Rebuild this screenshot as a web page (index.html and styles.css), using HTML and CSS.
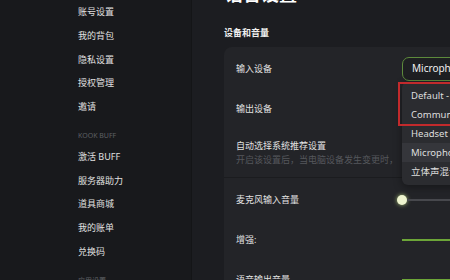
FILE: index.html
```html
<!DOCTYPE html>
<html lang="zh-CN">
<head>
  <meta charset="UTF-8" />
  <title>语音设置</title>
  <link rel="stylesheet" href="styles.css">
</head>
<body>
  <!-- Sidebar -->
  <nav class="sidebar">
    <ul class="nav-list">
      <li>账号设置</li>
      <li>我的背包</li>
      <li>隐私设置</li>
      <li>授权管理</li>
      <li>邀请</li>
    </ul>
    <div class="nav-header">KOOK BUFF</div>
    <ul class="nav-list">
      <li>激活 BUFF</li>
      <li>服务器助力</li>
      <li>道具商城</li>
      <li>我的账单</li>
      <li>兑换码</li>
    </ul>
    <div class="nav-header">应用设置</div>
  </nav>

  <!-- Main -->
  <main class="main">
    <h1 class="page-title">语音设置</h1>
    <h2 class="section-title">设备和音量</h2>

    <div class="card">
      <div class="row">
        <div class="label">输入设备</div>
        <div class="control">
          <div class="select">Microphone (Realtek Audio)</div>
          <div class="dropdown">
            <div class="option">Default - Headset Microphone</div>
            <div class="option">Communications - Headset Microphone</div>
            <div class="option">Headset Microphone</div>
            <div class="option active">Microphone (Realtek Audio)</div>
            <div class="option">立体声混音 (Realtek Audio)</div>
            <div class="highlight"></div>
          </div>
        </div>
      </div>
      <div class="row">
        <div class="label">输出设备</div>
        <div class="control"></div>
      </div>
      <div class="row row-tall">
        <div class="label">
          <div>自动选择系统推荐设置</div>
          <div class="sub">开启该设置后，当电脑设备发生变更时，不再弹出提示</div>
        </div>
      </div>

      <div class="divider"></div>

      <div class="row">
        <div class="label">麦克风输入音量</div>
        <div class="control">
          <div class="slider">
            <span class="knob"></span>
            <span class="track"></span>
          </div>
        </div>
      </div>
      <div class="row">
        <div class="label">增强:</div>
        <div class="control"><div class="bar"></div></div>
      </div>
      <div class="row">
        <div class="label">语音输出音量</div>
        <div class="control"><div class="bar"></div></div>
      </div>
    </div>
  </main>
</body>
</html>
```

FILE: styles.css
```css
/* RESET */
* { box-sizing: border-box; margin: 0; padding: 0; }
body {
  display: flex;
  height: 280px;
  overflow: hidden;
  background: #1c1d21;
  color: #e2e2e2;
  font-family: 'Noto Sans', 'Noto Sans CJK SC', sans-serif;
}

/* SIDEBAR */
.sidebar {
  width: 192px;
  flex-shrink: 0;
  padding-left: 78px;
  background: #18191c;
  border-right: 1px solid #141517;
}
.nav-list { list-style: none; }
.nav-list li {
  height: 23.75px;
  line-height: 23.75px;
  font-size: 9px;
  color: #e0e0e0;
  white-space: nowrap;
}
.nav-header {
  height: 26px;
  padding-top: 12px;
  font-size: 7px;
  line-height: 10px;
  color: #5e6064;
}

/* MAIN */
.main {
  flex: 1;
  padding-left: 32px;
  margin-top: -18px;
}
.page-title {
  font-size: 18px;
  font-weight: 700;
  line-height: 24px;
  color: #fff;
  margin-left: 1px;
}
.section-title {
  margin-top: 20px;
  font-size: 9px;
  font-weight: 700;
  line-height: 14px;
  color: #f0f0f0;
}

/* CARD */
.card {
  margin-top: 7px;
  width: 300px;
  padding-top: 2px;
  background: #232428;
  border-radius: 8px 0 0 8px;
}
.row {
  display: flex;
  align-items: center;
  height: 40px;
  padding-left: 12px;
}
.row-tall { height: 48px; }
.label {
  width: 166px;
  flex-shrink: 0;
  font-size: 9px;
  line-height: 14px;
  color: #e2e2e2;
  white-space: nowrap;
}
.sub {
  color: #55575c;
  overflow: hidden;
  width: 157px;
}
.control {
  flex: 1;
  position: relative;
  align-self: stretch;
  display: flex;
  align-items: center;
}
.divider {
  height: 1px;
  background: #1b1c1f;
  margin-bottom: 2px;
}

/* SELECT + DROPDOWN */
.select {
  width: 160px;
  height: 24px;
  margin-top: -1px;
  padding-left: 9px;
  line-height: 21px;
  font-size: 10px;
  color: #f0f0f0;
  background: #1e1f22;
  border: 1.5px solid #5d8a3c;
  border-radius: 7px;
  white-space: nowrap;
  overflow: hidden;
}
.dropdown {
  position: absolute;
  left: 0;
  top: 33px;
  width: 160px;
  padding: 4px 0;
  background: #2b2c30;
  border-radius: 6px;
  box-shadow: 0 2px 8px rgba(0,0,0,0.4);
  z-index: 5;
}
.option {
  height: 19px;
  line-height: 19px;
  padding-left: 9px;
  font-size: 9.5px;
  color: #dedede;
  white-space: nowrap;
  overflow: hidden;
}
.option.active { background: #35363b; }
.highlight {
  position: absolute;
  left: -4px;
  top: 0;
  width: 170px;
  height: 44px;
  border: 2px solid #c22a2c;
}

/* SLIDERS */
.slider {
  display: flex;
  align-items: center;
  width: 100%;
  margin-left: -5px;
}
.knob {
  width: 10px;
  height: 10px;
  border-radius: 50%;
  background: #eef4cf;
  box-shadow: 0 0 4px rgba(200,230,140,0.8);
  flex-shrink: 0;
}
.track {
  flex: 1;
  height: 2px;
  background: #47484d;
}
.bar {
  width: 100%;
  height: 2px;
  background: #6ca538;
}
```
